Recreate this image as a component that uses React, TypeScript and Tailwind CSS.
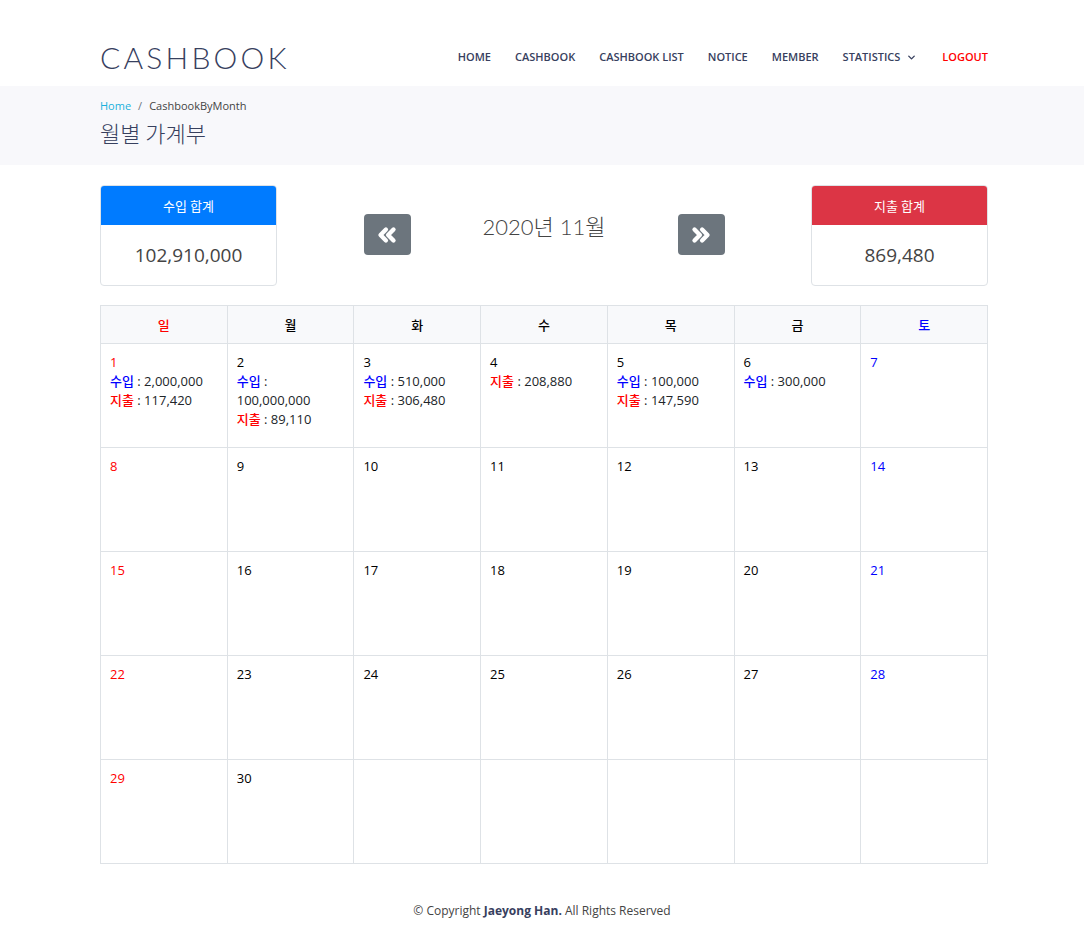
import React from 'react';
import { ChevronsLeft, ChevronsRight, ChevronDown } from 'lucide-react';

type Day = { d: number; income?: string; expense?: string };

const days: Record<number, Day> = {
  1: { d: 1, income: '2,000,000', expense: '117,420' },
  2: { d: 2, income: '100,000,000', expense: '89,110' },
  3: { d: 3, income: '510,000', expense: '306,480' },
  4: { d: 4, expense: '208,880' },
  5: { d: 5, income: '100,000', expense: '147,590' },
  6: { d: 6, income: '300,000' },
};

const weekNames = ['일', '월', '화', '수', '목', '금', '토'];
const navItems = ['HOME', 'CASHBOOK', 'CASHBOOK LIST', 'NOTICE', 'MEMBER'];

const font = { fontFamily: '"Open Sans", "Noto Sans CJK KR", sans-serif' };

const Cell: React.FC<{ day: number | null; col: number }> = ({ day, col }) => {
  const info = day ? days[day] : undefined;
  const color = col === 0 ? 'text-[#ff0000]' : col === 6 ? 'text-[#0000ff]' : 'text-black';
  return (
    <td className="h-[104px] w-[127px] border border-[#dee2e6] align-top px-[9px] pt-[9px] text-[13px] leading-[19px] text-[#212529]">
      {day && <div className={color}>{day}</div>}
      {info?.income && (
        <div>
          <span className="text-[#0000ff] font-medium">수입</span> : {info.income}
        </div>
      )}
      {info?.expense && (
        <div>
          <span className="text-[#ff0000] font-medium">지출</span> : {info.expense}
        </div>
      )}
    </td>
  );
};

export default function App() {
  const weeks: (number | null)[][] = [];
  let n = 1;
  for (let w = 0; w < 5; w++) {
    const row: (number | null)[] = [];
    for (let c = 0; c < 7; c++) {
      row.push(n <= 30 ? n++ : null);
    }
    weeks.push(row);
  }

  return (
    <div className="min-h-screen bg-white text-[#444444]" style={font}>
      {/* Header */}
      <header className="h-[86px]">
        <div className="w-[888px] ml-[100px] h-full flex items-center justify-between pt-[28px]">
          <div
            className="text-[30px] tracking-[3.2px] text-[#37405e]"
            style={{ fontFamily: 'Lato, "Open Sans", sans-serif', fontWeight: 300 }}
          >
            CASHBOOK
          </div>
          <nav className="flex items-center gap-[24px] text-[11px] font-semibold text-[#37405e]">
            {navItems.map(n => (
              <a key={n}>{n}</a>
            ))}
            <a className="flex items-center gap-[6px]">
              STATISTICS <ChevronDown size={11} strokeWidth={3} />
            </a>
            <a className="text-[#ff0000] ml-[1px]">LOGOUT</a>
          </nav>
        </div>
      </header>

      {/* Breadcrumbs */}
      <section className="bg-[#f8f8fb] h-[79px]">
        <div className="w-[888px] ml-[100px] pt-[12px]">
          <div className="text-[11px] text-[#444444]">
            <span className="text-[#1bb1dc]">Home</span>
            <span className="mx-[7px] text-[#6c757d]">/</span>
            CashbookByMonth
          </div>
          <h2 className="text-[22px] leading-[30px] mt-[2px] text-[#37405e]" style={{ fontFamily: '"Noto Sans CJK KR", sans-serif', fontWeight: 300 }}>
            월별 가계부
          </h2>
        </div>
      </section>

      <main className="w-[888px] ml-[100px] pt-[20px]">
        {/* Summary */}
        <div className="flex items-start justify-between">
          <div className="w-[177px] h-[101px] border border-[#dee2e6] rounded-[4px] overflow-hidden">
            <div className="bg-[#007bff] h-[39px] flex items-center justify-center text-white text-[13px]" style={{ fontFamily: '"Noto Sans CJK KR", sans-serif' }}>
              수입 합계
            </div>
            <div className="h-[60px] flex items-center justify-center text-[19px] text-[#444444]">102,910,000</div>
          </div>

          <div className="flex items-start mt-[29px]">
            <button className="w-[47px] h-[41px] bg-[#6c757d] rounded-[4px] flex items-center justify-center text-white">
              <ChevronsLeft size={26} strokeWidth={4} />
            </button>
            <div
              className="w-[267px] text-center text-[22px] leading-[24px] text-[#444444] pt-[1px]"
              style={{ fontFamily: 'Lato, "Noto Sans CJK KR", sans-serif', fontWeight: 300 }}
            >
              2020년 11월
            </div>
            <button className="w-[47px] h-[41px] bg-[#6c757d] rounded-[4px] flex items-center justify-center text-white">
              <ChevronsRight size={26} strokeWidth={4} />
            </button>
          </div>

          <div className="w-[177px] h-[101px] border border-[#dee2e6] rounded-[4px] overflow-hidden">
            <div className="bg-[#dc3545] h-[39px] flex items-center justify-center text-white text-[13px]" style={{ fontFamily: '"Noto Sans CJK KR", sans-serif' }}>
              지출 합계
            </div>
            <div className="h-[60px] flex items-center justify-center text-[19px] text-[#444444]">869,480</div>
          </div>
        </div>

        {/* Calendar */}
        <table className="w-[888px] mt-[19px] border-collapse table-fixed">
          <thead>
            <tr className="bg-[#f8f9fb]">
              {weekNames.map((w, i) => (
                <th
                  key={w}
                  className={`h-[38px] border border-[#dee2e6] text-[13px] font-medium ${
                    i === 0 ? 'text-[#ff0000]' : i === 6 ? 'text-[#0000ff]' : 'text-black'
                  }`}
                  style={{ fontFamily: '"Noto Sans CJK KR", sans-serif' }}
                >
                  {w}
                </th>
              ))}
            </tr>
          </thead>
          <tbody>
            {weeks.map((row, wi) => (
              <tr key={wi}>
                {row.map((d, ci) => (
                  <Cell key={ci} day={d} col={ci} />
                ))}
              </tr>
            ))}
          </tbody>
        </table>
      </main>

      <footer className="pt-[38px] pb-[14px] text-center text-[12px] text-[#444444]">
        © Copyright <strong className="font-bold text-[#37405e]">Jaeyong Han.</strong> All Rights Reserved
      </footer>
    </div>
  );
}
